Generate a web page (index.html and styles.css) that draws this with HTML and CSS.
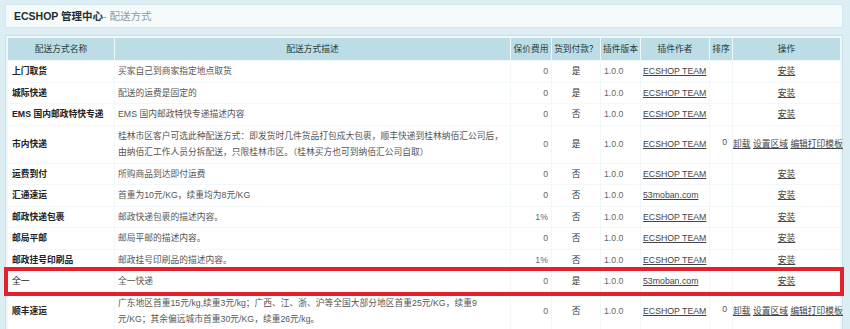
FILE: index.html
```html
<!DOCTYPE html>
<html lang="zh-CN">
<head>
<meta charset="utf-8">
<title>ECSHOP 管理中心 - 配送方式</title>
<link rel="stylesheet" href="styles.css">
</head>
<body>
<h1 class="page-title"><span class="title-main">ECSHOP 管理中心</span><span class="title-sub">- 配送方式</span></h1>
<div class="list-div">
  <table class="list-table">
    <colgroup>
      <col class="c-name"><col class="c-desc"><col class="c-fee"><col class="c-cod"><col class="c-ver"><col class="c-author"><col class="c-sort"><col class="c-act">
    </colgroup>
    <thead>
      <tr>
        <th>配送方式名称</th><th>配送方式描述</th><th>保价费用</th><th>货到付款？</th><th>插件版本</th><th>插件作者</th><th>排序</th><th>操作</th>
      </tr>
    </thead>
    <tbody>
      <tr>
        <td class="name">上门取货</td><td class="desc">买家自己到商家指定地点取货</td><td class="num">0</td><td class="center">是</td><td class="ver">1.0.0</td><td class="author"><a href="#">ECSHOP TEAM</a></td><td class="sort"></td><td class="act"><a href="#">安装</a></td>
      </tr>
      <tr>
        <td class="name">城际快递</td><td class="desc">配送的运费是固定的</td><td class="num">0</td><td class="center">是</td><td class="ver">1.0.0</td><td class="author"><a href="#">ECSHOP TEAM</a></td><td class="sort"></td><td class="act"><a href="#">安装</a></td>
      </tr>
      <tr>
        <td class="name">EMS 国内邮政特快专递</td><td class="desc">EMS 国内邮政特快专递描述内容</td><td class="num">0</td><td class="center">否</td><td class="ver">1.0.0</td><td class="author"><a href="#">ECSHOP TEAM</a></td><td class="sort"></td><td class="act"><a href="#">安装</a></td>
      </tr>
      <tr>
        <td class="name">市内快递</td><td class="desc">桂林市区客户可选此种配送方式：即发货时几件货品打包成大包裹，顺丰快递到桂林纳佰汇公司后，由纳佰汇工作人员分拆配送，只限桂林市区。（桂林买方也可到纳佰汇公司自取）</td><td class="num">0</td><td class="center">是</td><td class="ver">1.0.0</td><td class="author"><a href="#">ECSHOP TEAM</a></td><td class="sort"><span class="sort-val">0</span></td><td class="act act-multi"><a href="#">卸载</a> <a href="#">设置区域</a> <a href="#">编辑打印模板</a></td>
      </tr>
      <tr>
        <td class="name">运费到付</td><td class="desc">所购商品到达即付运费</td><td class="num">0</td><td class="center">否</td><td class="ver">1.0.0</td><td class="author"><a href="#">ECSHOP TEAM</a></td><td class="sort"></td><td class="act"><a href="#">安装</a></td>
      </tr>
      <tr>
        <td class="name">汇通速运</td><td class="desc">首重为10元/KG，续重均为8元/KG</td><td class="num">0</td><td class="center">否</td><td class="ver">1.0.0</td><td class="author"><a href="#">53moban.com</a></td><td class="sort"></td><td class="act"><a href="#">安装</a></td>
      </tr>
      <tr>
        <td class="name">邮政快递包裹</td><td class="desc">邮政快递包裹的描述内容。</td><td class="num">1%</td><td class="center">否</td><td class="ver">1.0.0</td><td class="author"><a href="#">ECSHOP TEAM</a></td><td class="sort"></td><td class="act"><a href="#">安装</a></td>
      </tr>
      <tr>
        <td class="name">邮局平邮</td><td class="desc">邮局平邮的描述内容。</td><td class="num">0</td><td class="center">否</td><td class="ver">1.0.0</td><td class="author"><a href="#">ECSHOP TEAM</a></td><td class="sort"></td><td class="act"><a href="#">安装</a></td>
      </tr>
      <tr>
        <td class="name">邮政挂号印刷品</td><td class="desc">邮政挂号印刷品的描述内容。</td><td class="num">1%</td><td class="center">否</td><td class="ver">1.0.0</td><td class="author"><a href="#">ECSHOP TEAM</a></td><td class="sort"></td><td class="act"><a href="#">安装</a></td>
      </tr>
      <tr class="highlight">
        <td class="name name-plain">全一</td><td class="desc">全一快递</td><td class="num">0</td><td class="center">是</td><td class="ver">1.0.0</td><td class="author"><a href="#">53moban.com</a></td><td class="sort"></td><td class="act"><a href="#">安装</a></td>
      </tr>
      <tr>
        <td class="name">顺丰速运</td><td class="desc">广东地区首重15元/kg,续重3元/kg；广西、江、浙、沪等全国大部分地区首重25元/KG，续重9元/KG；其余偏远城市首重30元/KG，续重26元/kg。</td><td class="num">0</td><td class="center">否</td><td class="ver">1.0.0</td><td class="author"><a href="#">ECSHOP TEAM</a></td><td class="sort"><span class="sort-val">0</span></td><td class="act act-multi"><a href="#">卸载</a> <a href="#">设置区域</a> <a href="#">编辑打印模板</a></td>
      </tr>
    </tbody>
  </table>
</div>
</body>
</html>
```
FILE: styles.css
```css
html, body {
  margin: 0;
  padding: 0;
}
body {
  background: #dceef3;
  font-family: "Liberation Sans", Arial, "Noto Sans CJK SC", sans-serif;
  font-size: 8.75px;
  color: #444;
  padding: 4px 7px 0 5px;
}
.page-title {
  margin: 0;
  height: 24px;
  line-height: 23px;
  box-sizing: border-box;
  padding: 0 0 0 8px;
  background: #f5fafb;
  border: 1px solid #d3e7ec;
  font-size: 10.5px;
  font-weight: normal;
}
.title-main {
  font-weight: bold;
  color: #1d2e33;
}
.title-sub {
  color: #8a9a9e;
}
.list-div {
  margin-top: 7px;
  border: 1px solid #c7e1e8;
  background: #f2f8f9;
  padding: 1px;
}
.list-table {
  width: 100%;
  table-layout: fixed;
  border-collapse: separate;
  border-spacing: 1px;
}
.c-name { width: 106px; }
.c-desc { width: 395px; }
.c-fee { width: 40px; }
.c-cod { width: 48px; }
.c-ver { width: 39px; }
.c-author { width: 68px; }
.c-sort { width: 22px; }
.c-act { width: auto; }
.list-table th {
  background: #bcdde6;
  color: #2a3c40;
  font-weight: normal;
  height: 22px;
  line-height: 22px;
  padding: 0;
  text-align: center;
  white-space: nowrap;
}
.list-table td {
  background: #fff;
  line-height: 16.5px;
  padding: 2px 3px;
  vertical-align: middle;
}
.list-table td.name {
  font-weight: bold;
  color: #222;
  white-space: nowrap;
  padding-left: 4px;
}
.list-table td.name-plain {
  font-weight: normal;
}
.list-table td.desc {
  color: #555;
}
.list-table td.num {
  text-align: right;
  color: #666;
}
.list-table td.center {
  text-align: center;
  color: #333;
}
.list-table td.ver {
  color: #666;
}
.list-table td.author {
  white-space: nowrap;
  padding-left: 2px;
}
.list-table a {
  color: #444;
  text-decoration: underline;
}
.list-table td.sort {
  text-align: right;
  padding: 0 5px 0 0;
  color: #555;
}
.sort-val {
  vertical-align: super;
}
.list-table td.act {
  text-align: center;
  white-space: nowrap;
}
.list-table td.act-multi {
  padding: 2px 0;
  text-align: left;
}
.highlight {
  outline: 4px solid #e3202b;
  outline-offset: 0;
}
```
